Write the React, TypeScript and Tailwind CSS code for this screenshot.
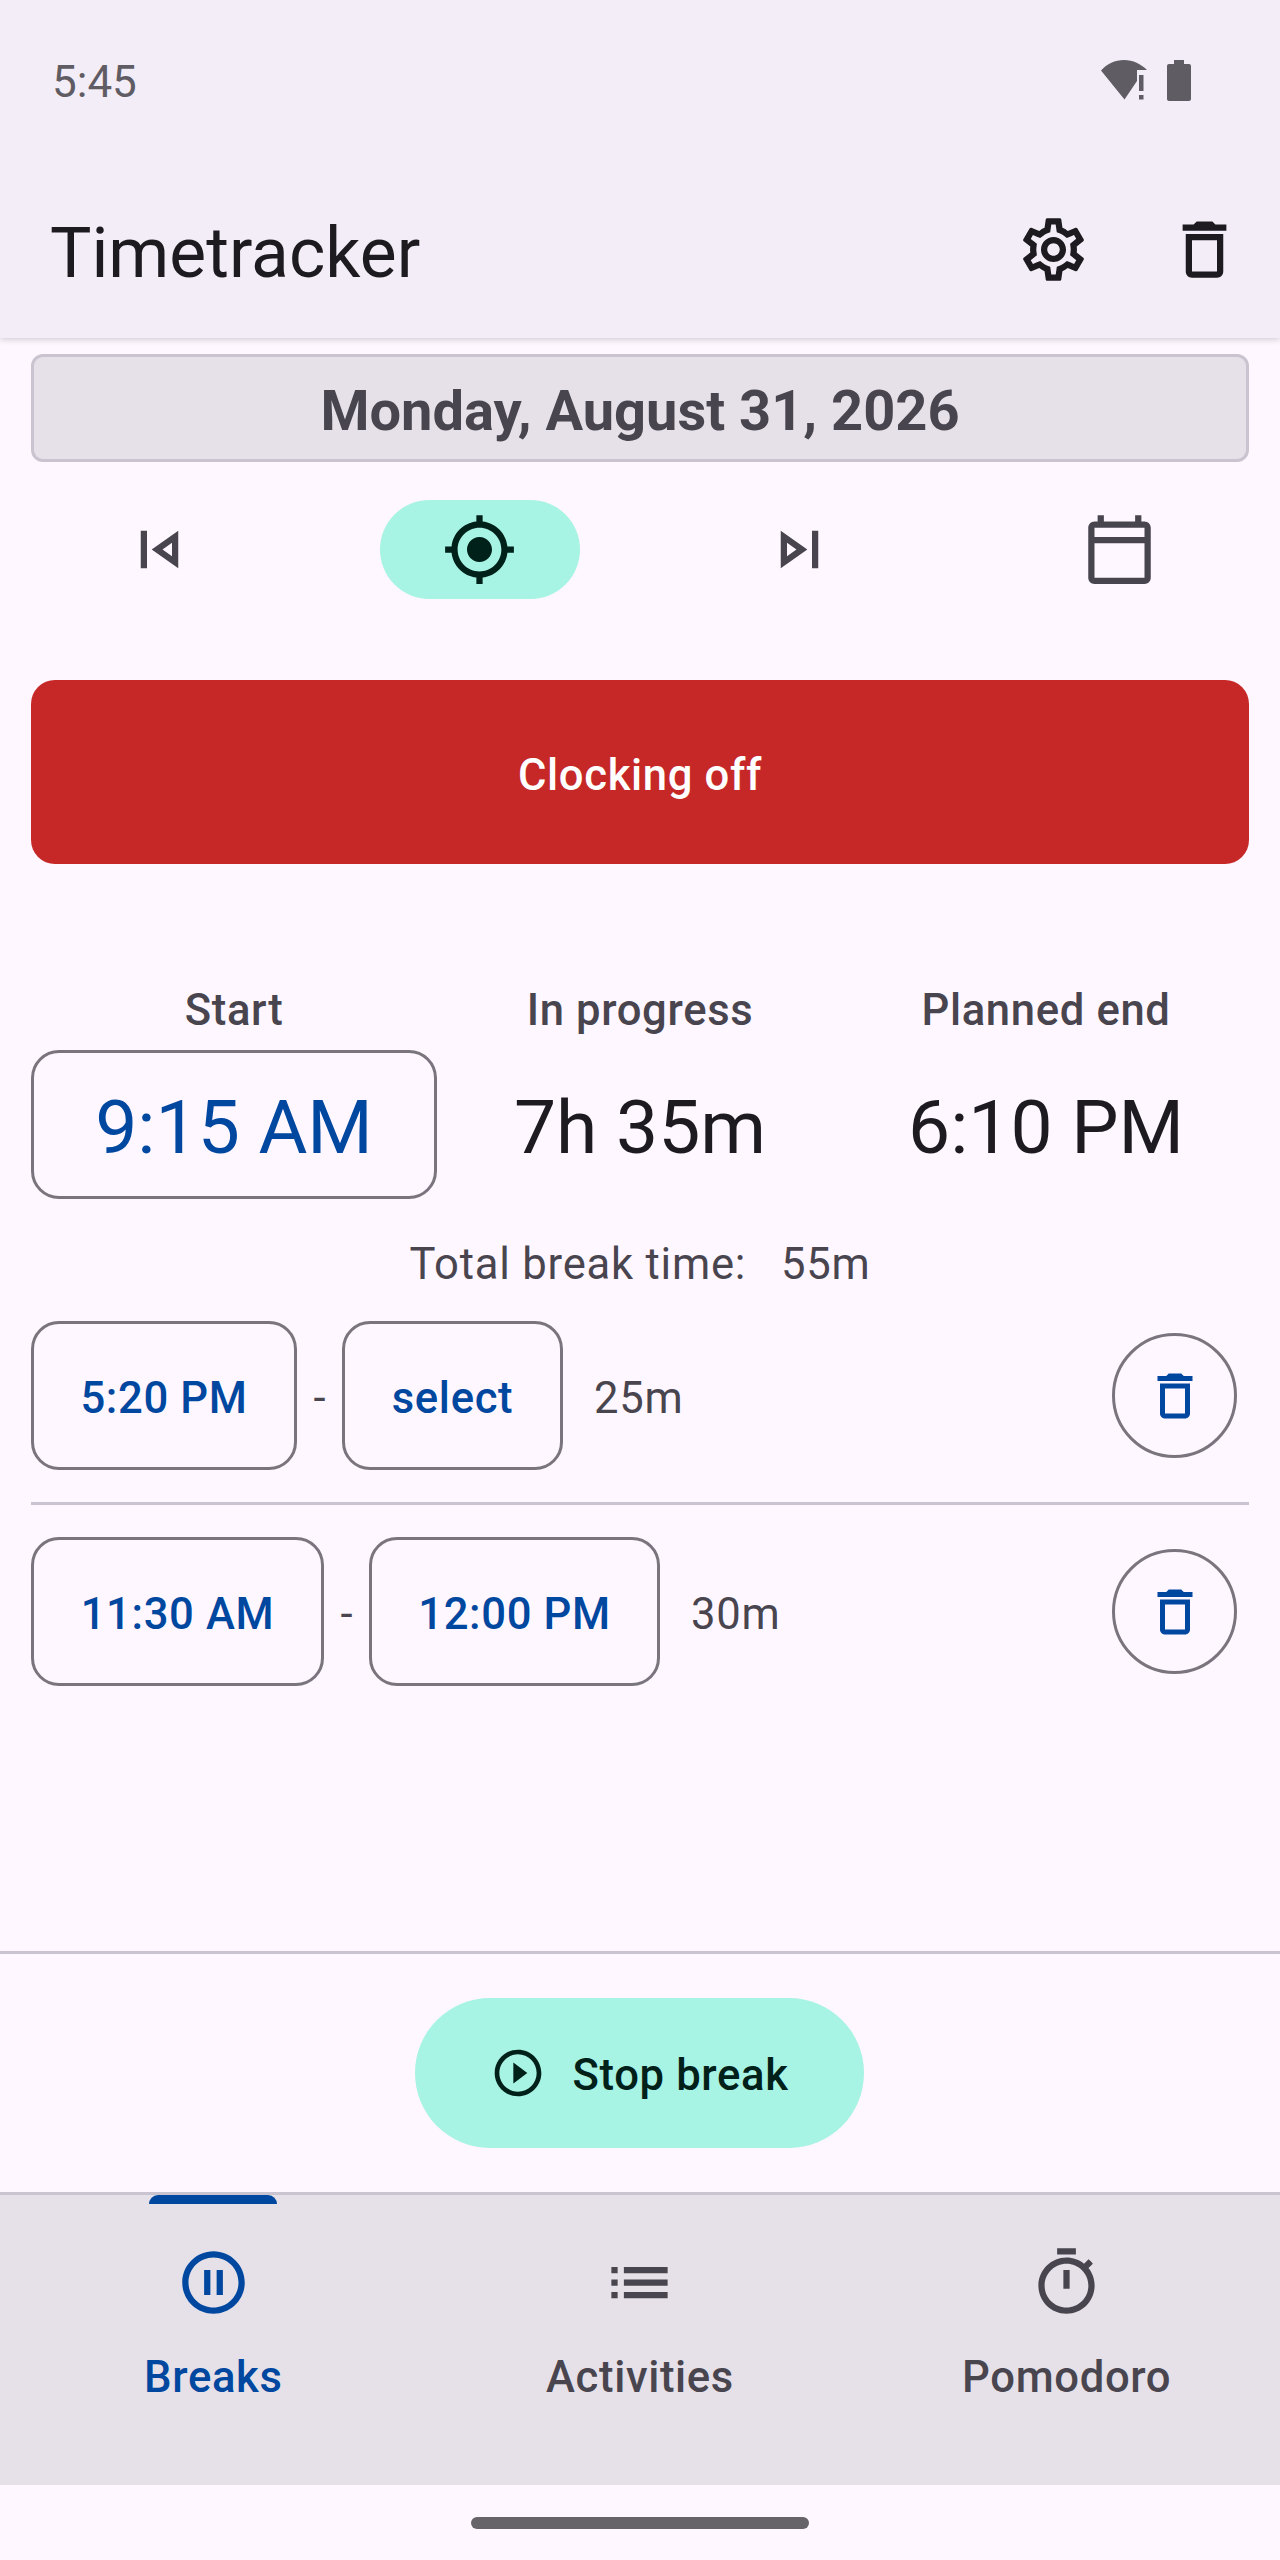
import React from 'react';

const PATHS = {
  settings:
    'M19.43 12.98c.04-.32.07-.64.07-.98 0-.34-.03-.66-.07-.98l2.11-1.65c.19-.15.24-.42.12-.64l-2-3.46c-.09-.16-.26-.25-.44-.25-.06 0-.12.01-.17.03l-2.49 1c-.52-.4-1.08-.73-1.69-.98l-.38-2.65C14.46 2.18 14.25 2 14 2h-4c-.25 0-.46.18-.49.42l-.38 2.65c-.61.25-1.17.59-1.69.98l-2.49-1c-.06-.02-.12-.03-.18-.03-.17 0-.34.09-.43.25l-2 3.46c-.13.22-.07.49.12.64l2.11 1.65c-.04.32-.07.65-.07.98 0 .33.03.66.07.98l-2.11 1.65c-.19.15-.24.42-.12.64l2 3.46c.09.16.26.25.44.25.06 0 .12-.01.17-.03l2.49-1c.52.4 1.08.73 1.69.98l.38 2.65c.03.24.24.42.49.42h4c.25 0 .46-.18.49-.42l.38-2.65c.61-.25 1.17-.59 1.69-.98l2.49 1c.06.02.12.03.18.03.17 0 .34-.09.43-.25l2-3.46c.12-.22.07-.49-.12-.64l-2.11-1.65zm-1.98-1.71c.04.31.05.52.05.73 0 .21-.02.43-.05.73l-.14 1.13.89.7 1.08.84-.7 1.21-1.27-.51-1.04-.42-.9.68c-.43.32-.84.56-1.25.73l-1.06.43-.16 1.13-.2 1.35h-1.4l-.19-1.35-.16-1.13-1.06-.43c-.43-.18-.83-.41-1.23-.71l-.91-.7-1.06.43-1.27.51-.7-1.21 1.08-.84.89-.7-.14-1.13c-.03-.31-.05-.54-.05-.74s.02-.43.05-.73l.14-1.13-.89-.7-1.08-.84.7-1.21 1.27.51 1.04.42.9-.68c.43-.32.84-.56 1.25-.73l1.06-.43.16-1.13.2-1.35h1.39l.19 1.35.16 1.13 1.06.43c.43.18.83.41 1.23.71l.91.7 1.06-.43 1.27-.51.7 1.21-1.07.85-.89.7.14 1.13zM12 8c-2.21 0-4 1.79-4 4s1.79 4 4 4 4-1.79 4-4-1.79-4-4-4zm0 6c-1.1 0-2-.9-2-2s.9-2 2-2 2 .9 2 2-.9 2-2 2z',
  trash: 'M16 9v10H8V9h8m-1.5-6h-5l-1 1H5v2h14V4h-3.5l-1-1zM18 7H6v12c0 1.1.9 2 2 2h8c1.1 0 2-.9 2-2V7z',
  prev: 'M6 6h2v12H6zm3.5 6 8.5 6V6l-8.5 6zm6.5 2.14L12.97 12 16 9.86v4.28z',
  next: 'M6 18l8.5-6L6 6v12zm2-8.14L11.03 12 8 14.14V9.86zM16 6h2v12h-2z',
  location:
    'M12 8c-2.21 0-4 1.79-4 4s1.79 4 4 4 4-1.79 4-4-1.79-4-4-4zm8.94 3c-.46-4.17-3.77-7.48-7.94-7.94V1h-2v2.06C6.83 3.52 3.52 6.83 3.06 11H1v2h2.06c.46 4.17 3.77 7.48 7.94 7.94V23h2v-2.06c4.17-.46 7.48-3.77 7.94-7.94H23v-2h-2.06zM12 19c-3.87 0-7-3.13-7-7s3.13-7 7-7 7 3.13 7 7-3.13 7-7 7z',
  calendar: 'M20 3h-1V1h-2v2H7V1H5v2H4c-1.1 0-2 .9-2 2v16c0 1.1.9 2 2 2h16c1.1 0 2-.9 2-2V5c0-1.1-.9-2-2-2zm0 18H4V10h16v11zm0-13H4V5h16v3z',
  play: 'M10 16.5l6-4.5-6-4.5v9zM12 2C6.48 2 2 6.48 2 12s4.48 10 10 10 10-4.48 10-10S17.52 2 12 2zm0 18c-4.41 0-8-3.59-8-8s3.59-8 8-8 8 3.59 8 8-3.59 8-8 8z',
  pause: 'M9 16h2V8H9v8zm3-14C6.48 2 2 6.48 2 12s4.48 10 10 10 10-4.48 10-10S17.52 2 12 2zm0 18c-4.41 0-8-3.59-8-8s3.59-8 8-8 8 3.59 8 8-3.59 8-8 8zm1-4h2V8h-2v8z',
  list: 'M3 13h2v-2H3v2zm0 4h2v-2H3v2zm0-8h2V7H3v2zm4 4h14v-2H7v2zm0 4h14v-2H7v2zM7 7v2h14V7H7z',
  timer: 'M15 1H9v2h6V1zm-4 13h2V8h-2v6zm8.03-6.61l1.42-1.42c-.43-.51-.9-.99-1.41-1.41l-1.42 1.42C16.07 4.74 14.12 4 12 4c-4.97 0-9 4.03-9 9s4.02 9 9 9 9-4.03 9-9c0-2.12-.74-4.07-1.97-5.61zM12 20c-3.87 0-7-3.13-7-7s3.13-7 7-7 7 3.13 7 7-3.13 7-7 7z',
};

const Icon: React.FC<{ d: string; className: string }> = ({ d, className }) => (
  <svg viewBox="0 0 24 24" fill="currentColor" className={className}>
    <path d={d} />
  </svg>
);

const TimeBox: React.FC<{ label: string; className: string }> = ({ label, className }) => (
  <div className={`flex h-full items-center justify-center rounded-[28px] border-[3px] border-[#79747e] pt-[7px] text-[43.6px] font-medium tracking-[0.65px] text-[#0047a0] ${className}`}>
    {label}
  </div>
);

const BreakRow: React.FC<{ from: string; to: string; total: string; fromW: string; toW: string }> = ({ from, to, total, fromW, toW }) => (
  <div className="flex h-[149px] items-center pl-[31px] pr-[43px]">
    <TimeBox label={from} className={fromW} />
    <span className="w-[45px] pt-[7px] text-center text-[43.6px] text-[#49454f]">-</span>
    <TimeBox label={to} className={toW} />
    <span className="ml-[31px] pt-[7px] text-[43.6px] tracking-[0.78px] text-[#49454f]">{total}</span>
    <div className="ml-auto flex h-[125px] w-[125px] items-center justify-center rounded-full border-[3px] border-[#79747e] text-[#0047a0]">
      <Icon d={PATHS.trash} className="h-[60px] w-[60px]" />
    </div>
  </div>
);

const NavItem: React.FC<{ d: string; label: string; active?: boolean }> = ({ d, label, active }) => (
  <div className={`relative flex flex-col items-center pt-[50px] ${active ? 'text-[#0047a0]' : 'text-[#49454f]'}`}>
    {active && <div className="absolute left-[149px] top-0 h-[9px] w-[128px] rounded-t-[9px] bg-[#0047a0]" />}
    <Icon d={d} className="h-[75px] w-[75px]" />
    <span className="mt-[26px] h-[60px] text-[43.6px] font-medium leading-[64px] tracking-[0.65px]">{label}</span>
  </div>
);

const App: React.FC = () => {
  return (
    <div className="flex h-[2560px] w-[1280px] flex-col overflow-hidden bg-[#fef7ff] font-['Roboto',sans-serif]">
      <header className="relative z-10 h-[338px] bg-[#f3edf7] shadow-[0_2px_6px_rgba(0,0,0,0.16)]">
        <div className="flex h-[160px] items-center justify-between pl-[52px] pr-[89px] text-[#5f5c64]">
          <span className="pt-[3px] text-[44px]">5:45</span>
          <div className="flex items-center gap-[20px]">
            <svg viewBox="0 0 46 40" fill="currentColor" className="h-[40px] w-[46px]">
              <path d="M0 10.500C6 4 14 0 23 0c9 0 17 4 23 10H36v11L23.500 39.500z" />
              <path d="M38 15h4.500v16H38zM38 35h4.500v4.500H38z" />
            </svg>
            <svg viewBox="0 0 24 41" fill="currentColor" className="h-[41px] w-[24px]">
              <path d="M7 0h10v4h5c1.100 0 2 .9 2 2v33c0 1.100-.9 2-2 2H2c-1.100 0-2-.9-2-2V6c0-1.100.9-2 2-2h5z" />
            </svg>
          </div>
        </div>
        <div className="flex h-[178px] items-center justify-between pl-[50px] pr-[38px] pt-[6px]">
          <h1 className="pt-[5px] text-[69.5px] text-[#1d1b20]">Timetracker</h1>
          <div className="mb-[5px] flex gap-[76px] text-[#1d1b20]">
            <Icon d={PATHS.settings} className="h-[75px] w-[75px]" />
            <Icon d={PATHS.trash} className="h-[75px] w-[75px]" />
          </div>
        </div>
      </header>

      <main className="flex flex-1 flex-col">
        <div className="mx-[31px] mt-[16px] flex h-[108px] items-center justify-center rounded-[12px] border-[3px] border-[#cac4d0] bg-[#e6e1e8] pt-[6px] text-[56px] font-bold text-[#49454f]">
          Monday, August 31, 2026
        </div>

        <div className="mt-[38px] grid h-[99px] grid-cols-4 text-[#49454f]">
          <div className="flex items-center justify-center">
            <Icon d={PATHS.prev} className="mr-[1px] h-[75px] w-[75px]" />
          </div>
          <div className="flex items-center justify-center">
            <div className="flex h-[99px] w-[200px] items-center justify-center rounded-full bg-[#a7f3e4] text-[#00201a]">
              <Icon d={PATHS.location} className="mr-[1px] h-[75px] w-[75px]" />
            </div>
          </div>
          <div className="flex items-center justify-center">
            <Icon d={PATHS.next} className="mr-[1px] h-[75px] w-[75px]" />
          </div>
          <div className="flex items-center justify-center">
            <Icon d={PATHS.calendar} className="mr-[1px] h-[75px] w-[75px]" />
          </div>
        </div>

        <div className="mx-[31px] mt-[81px] flex h-[184px] items-center justify-center rounded-[24px] bg-[#c62828] pt-[8px] text-[43.6px] font-medium tracking-[0.65px] text-white">
          Clocking off
        </div>

        <div className="mx-[31px] mt-[120px] grid grid-cols-3 text-center">
          <span className="mb-[14px] h-[52px] text-[43.6px] font-medium leading-[54px] tracking-[0.65px] text-[#49454f]">Start</span>
          <span className="mb-[14px] h-[52px] text-[43.6px] font-medium leading-[54px] tracking-[0.65px] text-[#49454f]">In progress</span>
          <span className="mb-[14px] h-[52px] text-[43.6px] font-medium leading-[54px] tracking-[0.65px] text-[#49454f]">Planned end</span>
          <div className="flex h-[149px] items-center justify-center rounded-[28px] border-[3px] border-[#79747e] pt-[5px] text-[75px] text-[#0047a0]">
            9:15 AM
          </div>
          <div className="flex h-[149px] items-center justify-center pt-[5px] text-[75px] text-[#1d1b20]">7h 35m</div>
          <div className="flex h-[149px] items-center justify-center pt-[5px] text-[75px] text-[#1d1b20]">6:10 PM</div>
        </div>

        <div className="mt-[33px] h-[60px] whitespace-pre text-center text-[43.6px] leading-[66px] tracking-[0.78px] text-[#49454f]">
          {'Total break time:   55m'}
        </div>

        <div className="mt-[29px]">
          <BreakRow from="5:20 PM" to="select" total="25m" fromW="w-[266px]" toW="w-[221px]" />
        </div>
        <div className="mx-[31px] mt-[32px] h-[3px] bg-[#cac4d0]" />
        <div className="mt-[32px]">
          <BreakRow from="11:30 AM" to="12:00 PM" total="30m" fromW="w-[293px]" toW="w-[291px]" />
        </div>

        <div className="mt-auto flex h-[241px] items-center justify-center border-t-[3px] border-[#cac4d0]">
          <div className="mr-[1px] flex h-[150px] w-[449px] items-center justify-center gap-[26px] rounded-full bg-[#a7f3e4] text-[#00201a]">
            <Icon d={PATHS.play} className="h-[56px] w-[56px]" />
            <span className="pt-[5px] text-[43.6px] font-medium tracking-[0.65px]">Stop break</span>
          </div>
        </div>
      </main>

      <nav className="grid h-[293px] grid-cols-3 border-t-[3px] border-[#cac4d0] bg-[#e6e1e8]">
        <NavItem d={PATHS.pause} label="Breaks" active />
        <NavItem d={PATHS.list} label="Activities" />
        <NavItem d={PATHS.timer} label="Pomodoro" />
      </nav>

      <div className="flex h-[75px] justify-center pt-[32px]">
        <div className="h-[12px] w-[338px] rounded-full bg-[#666469]" />
      </div>
    </div>
  );
};

export default App;
